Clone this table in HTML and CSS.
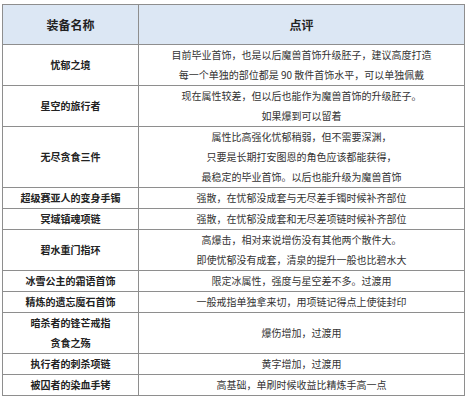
FILE: index.html
```html
<!DOCTYPE html>
<html lang="zh-CN">
<head>
<meta charset="utf-8">
<title>装备点评</title>
<link rel="stylesheet" href="styles.css">
</head>
<body>
<table class="gear">
  <colgroup><col class="c-name"><col class="c-comment"></colgroup>
  <thead>
    <tr><th>装备名称</th><th>点评</th></tr>
  </thead>
  <tbody>
    <tr><td class="name">忧郁之境</td><td>目前毕业首饰，也是以后魔兽首饰升级胚子，建议高度打造<br>每一个单独的部位都是 90 散件首饰水平，可以单独佩戴</td></tr>
    <tr><td class="name">星空的旅行者</td><td>现在属性较差，但以后也能作为魔兽首饰的升级胚子。<br>如果爆到可以留着</td></tr>
    <tr><td class="name">无尽贪食三件</td><td>属性比高强化忧郁稍弱，但不需要深渊，<br>只要是长期打安图恩的角色应该都能获得，<br>最稳定的毕业首饰。以后也能升级为魔兽首饰</td></tr>
    <tr><td class="name">超级赛亚人的变身手镯</td><td>强散，在忧郁没成套与无尽差手镯时候补齐部位</td></tr>
    <tr><td class="name">冥域镇魂项链</td><td>强散，在忧郁没成套和无尽差项链时候补齐部位</td></tr>
    <tr><td class="name">碧水重门指环</td><td>高爆击，相对来说增伤没有其他两个散件大。<br>即使忧郁没有成套，清泉的提升一般也比碧水大</td></tr>
    <tr><td class="name">冰雪公主的霜语首饰</td><td>限定冰属性，强度与星空差不多。过渡用</td></tr>
    <tr><td class="name">精炼的遗忘魔石首饰</td><td>一般戒指单独拿来切，用项链记得点上使徒封印</td></tr>
    <tr><td class="name">暗杀者的锋芒戒指<br>贪食之殇</td><td>爆伤增加，过渡用</td></tr>
    <tr><td class="name">执行者的刺杀项链</td><td>黄字增加，过渡用</td></tr>
    <tr><td class="name">被囚者的染血手铐</td><td>高基础，单刷时候收益比精炼手高一点</td></tr>
  </tbody>
</table>
</body>
</html>
```
FILE: styles.css
```css
html, body {
  margin: 0;
  padding: 0;
  background: #ffffff;
}
body {
  padding: 4px 0 0 2px;
  font-family: "Noto Sans CJK SC", "Noto Sans", sans-serif;
}
.gear {
  border-collapse: collapse;
  width: 462px;
  table-layout: fixed;
}
.c-name { width: 136px; }
.c-comment { width: 326px; }
.gear th,
.gear td {
  border: 1px solid #8e8e8e;
  padding: 0;
  text-align: center;
  vertical-align: middle;
}
.gear th {
  height: 39px;
  background: #dce7f4;
  font-size: 12px;
  font-weight: 700;
  color: #222;
}
.gear td {
  font-size: 10px;
  line-height: 20px;
  color: #333;
  white-space: nowrap;
}
.gear td.name {
  font-weight: 700;
  color: #222;
}
```
